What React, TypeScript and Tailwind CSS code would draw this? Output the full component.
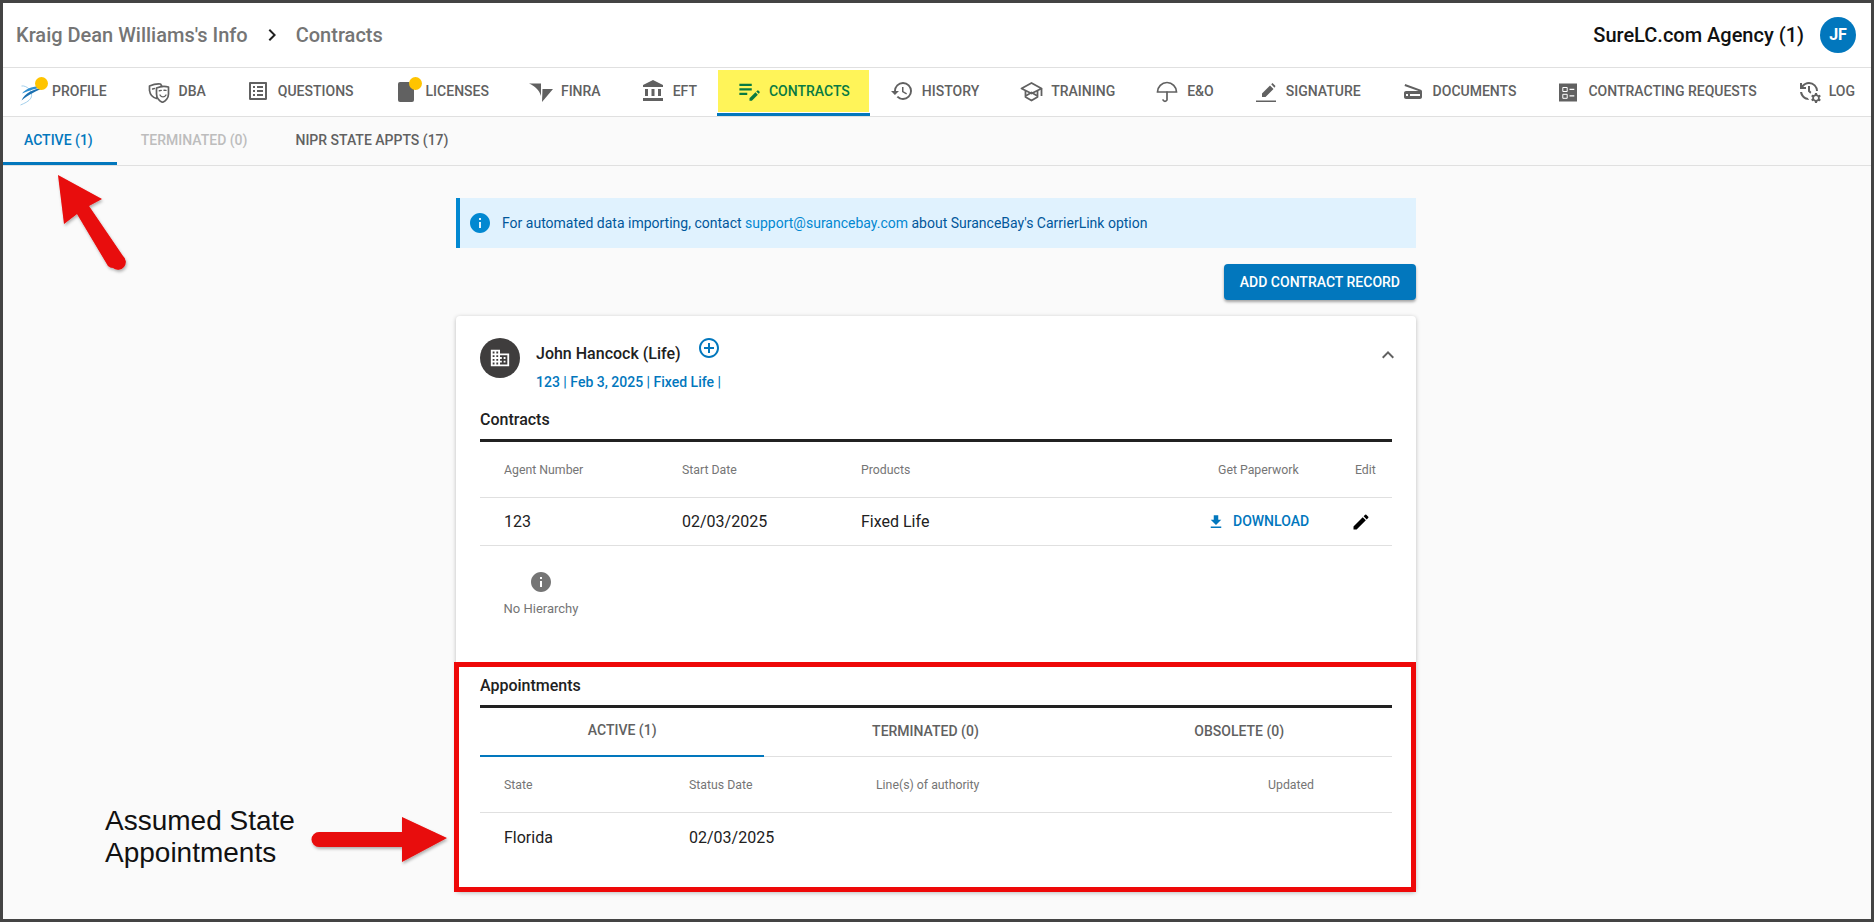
import React from "react";
import {
  MdOutlineListAlt, MdAccountBalance, MdEditNote, MdHistory,
  MdScanner, MdManageHistory, MdInfo, MdFileDownload, MdEdit, MdAddCircleOutline,
  MdKeyboardArrowUp, MdDomain, MdKeyboardArrowRight,
} from "react-icons/md";

const Badge = ({ className }: { className: string }) => (
  <span className={`absolute w-[13px] h-[13px] rounded-full bg-[#ffc400] ${className}`} />
);

const ProfileIcon = () => (
  <span className="relative w-6 h-6 block">
    <svg width="24" height="24" viewBox="0 0 24 24" className="overflow-visible">
      <path d="M1.500 7 C6 6 14 12 11 19 C9 22.500 4 24.500 0.500 26" fill="none" stroke="#8cc3e6" strokeWidth="0.8" />
      <path d="M2 14.500 C7 8.500 15 6.500 23 8 C16 9.500 10 11 2 14.500 Z" fill="#2d8fd2" />
      <path d="M1.500 21.500 C5 14 13 10 23 9 C17 12 9 15 1.500 21.500 Z" fill="#1a6fb0" />
    </svg>
    <Badge className="left-[15px] -top-[2px]" />
  </span>
);

const DbaIcon = () => (
  <svg width="24" height="24" viewBox="0 0 24 24" fill="none" stroke="#616161" strokeWidth="1.700" strokeLinejoin="round" strokeLinecap="round">
    <path d="M2.500 7 C6 5.500 10 4.500 13.500 5 L15 7.500 L9.500 19.500 C5.500 18.500 3 15 2.500 11.500 Z" />
    <path d="M9.500 9 C13 7.500 17.500 7 21.500 8 V15 C21.500 19 18.500 22.500 15.500 23.300 C12.500 22.500 9.500 19 9.500 15 Z" fill="#ffffff" />
    <path d="M12.300 11.800 L14.300 11.400 M17 11.200 L19 11.400 M13 16 C14.500 18.500 17.500 18.500 19 16" strokeWidth="1.400" />
    <path d="M5.500 10 L7.500 9.500" strokeWidth="1.300" />
  </svg>
);

const LicenseIcon = () => (
  <span className="relative w-6 h-6 block">
    <svg width="24" height="24" viewBox="0 0 24 24">
      <path d="M6 3 H15 L20 8 V21 A2 2 0 0 1 18 23 H6 A2 2 0 0 1 4 21 V5 A2 2 0 0 1 6 3 Z" fill="#616161" />
    </svg>
    <Badge className="left-[15px] -top-[2px]" />
  </span>
);

const FinraIcon = () => (
  <svg width="24" height="24" viewBox="0 0 24 24">
    <path d="M0 4.500 H12 V17 C10 11 6 7 0 4.500 Z" fill="#616161" />
    <path d="M13.500 10 H24 L13 23 Z" fill="#616161" />
  </svg>
);

const TrainingIcon = () => (
  <svg width="24" height="24" viewBox="0 0 24 24" fill="none" stroke="#616161" strokeWidth="1.800" strokeLinejoin="round">
    <path d="M12.500 4 L22.500 9.500 L12.500 14.500 L2.500 9.500 Z" />
    <path d="M6.500 12 V18 L12.500 21.500 L18.500 18 V12" />
    <path d="M6.500 17 L12.500 13.500 L18.500 17" />
    <path d="M22.500 9.500 V17" />
  </svg>
);

const UmbrellaIcon = () => (
  <svg width="24" height="24" viewBox="0 0 24 24" fill="none" stroke="#616161" strokeWidth="1.700" strokeLinecap="round">
    <path d="M2.500 13 A9.500 9.500 0 0 1 21.500 13 Z" />
    <path d="M12 13 V21 A2.200 2.200 0 0 1 8 21" />
  </svg>
);

const SignatureIcon = () => (
  <svg width="24" height="24" viewBox="0 0 24 24">
    <path d="M2 21.500 H22 V23 H2 Z" fill="#616161" />
    <path d="M8 18 L8 14.500 L16 6.500 L19.500 10 L11.500 18 Z M17.200 5.300 L18.500 4 L21.500 7 L20.500 8.800 Z" fill="#616161" />
  </svg>
);

const BallotIcon = () => (
  <svg width="24" height="24" viewBox="0 0 24 24">
    <path d="M3 4.500 H21 V22.500 H3 Z" fill="#616161" />
    <path d="M6.800 8.500 H11.200 V12.500 H6.800 Z M6.800 15.300 H11.200 V19.300 H6.800 Z" fill="none" stroke="#ffffff" strokeWidth="1" />
    <path d="M13.500 9.800 H18.300 V11 H13.500 Z M13.500 16.300 H18.300 V17.500 H13.500 Z" fill="#ffffff" />
  </svg>
);

const tabs: { label: string; icon: React.ReactNode }[] = [
  { label: "DBA", icon: <DbaIcon /> },
  { label: "Questions", icon: <MdOutlineListAlt size={24} color="#616161" /> },
  { label: "Licenses", icon: <LicenseIcon /> },
  { label: "FINRA", icon: <FinraIcon /> },
  { label: "EFT", icon: <MdAccountBalance size={24} color="#616161" /> },
];
const tabsAfter: { label: string; icon: React.ReactNode }[] = [
  { label: "History", icon: <MdHistory size={24} color="#616161" /> },
  { label: "Training", icon: <TrainingIcon /> },
  { label: "E&O", icon: <UmbrellaIcon /> },
  { label: "Signature", icon: <SignatureIcon /> },
  { label: "Documents", icon: <MdScanner size={24} color="#616161" /> },
  { label: "Contracting Requests", icon: <BallotIcon /> },
  { label: "Log", icon: <MdManageHistory size={24} color="#616161" /> },
];

const NavTab = ({ label, icon, first }: { label: string; icon: React.ReactNode; first?: boolean }) => (
  <div className={`flex items-center h-full pr-5 border-b-[3px] border-transparent shrink-0 ${first ? "pl-[17px]" : "pl-5"}`}>
    <span className="w-6 h-6 mr-2 shrink-0">{icon}</span>
    <span className="pt-px text-[14px] font-medium uppercase text-[#616161] whitespace-nowrap">{label}</span>
  </div>
);

export default function App() {
  return (
    <div className="relative box-border w-[1874px] h-[922px] overflow-hidden border-[3px] border-[#444444] bg-[#fafafa] font-['Roboto',sans-serif] text-[#212121]">
      {/* Header */}
      <header className="h-[65px] bg-white border-b border-[#e0e0e0] flex items-center justify-between pl-[13px] pr-[15px]">
        <div className="flex items-center text-[20px] font-medium text-[#757575]">
          <span>Kraig Dean Williams's Info</span>
          <MdKeyboardArrowRight size={24} className="text-[#212121] mx-[12px]" />
          <span>Contracts</span>
        </div>
        <div className="flex items-center gap-4">
          <span className="text-[20px] font-medium text-[#111111]">SureLC.com Agency (1)</span>
          <span className="w-9 h-9 rounded-full bg-[#0277bd] text-white font-bold text-[16px] flex items-center justify-center">JF</span>
        </div>
      </header>

      {/* Main nav */}
      <nav className="h-[49px] bg-white border-b border-[#e0e0e0] flex items-stretch">
        <NavTab first label="Profile" icon={<ProfileIcon />} />
        {tabs.map((t) => <NavTab key={t.label} {...t} />)}
        <div className="relative flex items-center h-full px-5 border-b-[3px] border-[#0277bd] shrink-0">
          <span className="absolute left-px right-px top-[2px] bottom-px bg-[#fff459]" />
          <span className="relative w-6 h-6 mr-2"><MdEditNote size={27} color="#087a42" className="-ml-px -mt-[2px]" /></span>
          <span className="relative pt-px text-[14px] font-medium uppercase text-[#087a42] whitespace-nowrap">Contracts</span>
        </div>
        {tabsAfter.map((t) => <NavTab key={t.label} {...t} />)}
      </nav>

      {/* Sub tabs */}
      <div className="h-[49px] border-b border-[#e0e0e0] flex items-stretch text-[14px] font-medium">
        <div className="flex items-center pl-[21px] pr-6 pt-px border-b-[3px] border-[#0277bd] text-[#0277bd]">ACTIVE (1)</div>
        <div className="flex items-center px-6 pb-[2px] text-[#bdbdbd]">TERMINATED (0)</div>
        <div className="flex items-center px-6 pb-[2px] text-[#616161]">NIPR STATE APPTS (17)</div>
      </div>

      {/* Main */}
      <main className="w-[960px] ml-[453px] pt-8 flex flex-col gap-4">
        <div className="h-[50px] bg-[#e0f2fe] border-l-4 border-[#0288d1] flex items-center pl-2 text-[14px] text-[#01579b]">
          <MdInfo size={24} className="text-[#0288d1] mr-[10px]" />
          <span>For automated data importing, contact <span className="text-[#0288d1]">support@surancebay.com</span> about SuranceBay's CarrierLink option</span>
        </div>
        <div className="flex justify-end">
          <button className="h-9 px-4 rounded bg-[#0277bd] text-white text-[14px] font-medium shadow-[0_2px_3px_rgba(0,0,0,0.35)]">ADD CONTRACT RECORD</button>
        </div>

        {/* Card */}
        <section className="relative bg-white rounded shadow-[0_1px_4px_rgba(0,0,0,0.25)] px-6 h-[576px]">
          <div className="h-[91px] pt-[22px] flex">
            <span className="w-10 h-10 rounded-full bg-[#3f3d3d] flex items-center justify-center">
              <MdDomain size={22} color="#ffffff" />
            </span>
            <div className="ml-4 flex-1">
              <div className="flex items-start h-[34px]">
                <span className="mt-1 text-[16px] leading-6 font-medium">John Hancock (Life)</span>
                <MdAddCircleOutline size={24} className="text-[#0277bd] ml-[16px] -mt-[2px]" />
              </div>
              <div className="text-[14px] leading-5 font-medium text-[#0277bd]">123 | Feb 3, 2025 | Fixed Life |</div>
            </div>
            <MdKeyboardArrowUp size={24} className="text-[#616161] mt-[5px] -mr-[8px]" />
          </div>

          <div className="h-[35px] pt-px text-[16px] leading-6 font-medium border-b-[3px] border-[#212121]">Contracts</div>
          <div className="grid grid-cols-[178px_179px_349px_136px_1fr] items-center h-[56px] pt-px border-b border-[#e0e0e0] px-6 text-[12.3px] text-[#757575]">
            <span>Agent Number</span><span>Start Date</span><span>Products</span>
            <span className="pl-2">Get Paperwork</span><span className="pl-[9px]">Edit</span>
          </div>
          <div className="grid grid-cols-[178px_179px_349px_136px_1fr] items-center h-[48px] border-b border-[#e0e0e0] px-6 text-[16px]">
            <span>123</span><span>02/03/2025</span><span>Fixed Life</span>
            <span className="flex items-center text-[14px] font-medium text-[#0277bd]">
              <MdFileDownload size={18} className="-ml-[3px] mr-[8px]" />DOWNLOAD
            </span>
            <span className="pl-[5px]"><MdEdit size={20} color="#000000" /></span>
          </div>
          <div className="h-[127px] pt-6 pl-6">
            <div className="w-[74px] flex flex-col items-center">
              <MdInfo size={24} color="#757575" />
              <span className="mt-[5px] text-[13px] text-[#757575] whitespace-nowrap">No Hierarchy</span>
            </div>
          </div>

          <div className="h-[35px] pt-px text-[16px] leading-6 font-medium border-b-[3px] border-[#212121]">Appointments</div>
          <div className="flex h-[49px] border-b border-[#e0e0e0] text-[14px] font-medium text-[#616161]">
            <div className="flex-auto flex items-center justify-center pb-[2px] border-b-2 border-[#0277bd] -mb-px">ACTIVE (1)</div>
            <div className="flex-auto flex items-center justify-center pb-[2px]">TERMINATED (0)</div>
            <div className="flex-auto flex items-center justify-center pb-[2px]">OBSOLETE (0)</div>
          </div>
          <div className="grid grid-cols-[185px_187px_392px_1fr] items-center h-[56px] pt-px border-b border-[#e0e0e0] px-6 text-[12.3px] text-[#757575]">
            <span>State</span><span>Status Date</span><span>Line(s) of authority</span><span>Updated</span>
          </div>
          <div className="grid grid-cols-[185px_187px_392px_1fr] items-center h-[48px] pt-px px-6 text-[16px]">
            <span>Florida</span><span>02/03/2025</span>
          </div>

          {/* Red annotation box */}
          <div className="absolute -left-[2px] right-0 top-[346px] bottom-0 border-[5px] border-[#ee0808] pointer-events-none" />
        </section>
      </main>

      {/* Annotations */}
      <svg width="1874" height="922" className="absolute -left-[3px] -top-[3px] pointer-events-none">
        <defs>
          <filter id="sh" x="-20%" y="-20%" width="140%" height="140%">
            <feDropShadow dx="1" dy="2" stdDeviation="1.500" floodColor="#000000" floodOpacity="0.3" />
          </filter>
        </defs>
        <g filter="url(#sh)" fill="#e80808" stroke="none">
          <path d="M58 175 L102 199 L89 206 L123 256 A6 6 0 0 1 113 268 A8 8 0 0 1 108 266 L77 214 L64 224 Z" />
          <path d="M319 832 L402 832 L402 817 L447 838 L402 862 L402 847 L319 847 A7.500 7.500 0 0 1 319 832 Z" />
        </g>
      </svg>
      <div className="absolute left-[102px] top-[802px] w-[240px] font-['Liberation_Sans',sans-serif] text-[28px] leading-[32px] text-[#111111]">
        Assumed State<br />Appointments
      </div>
    </div>
  );
}
